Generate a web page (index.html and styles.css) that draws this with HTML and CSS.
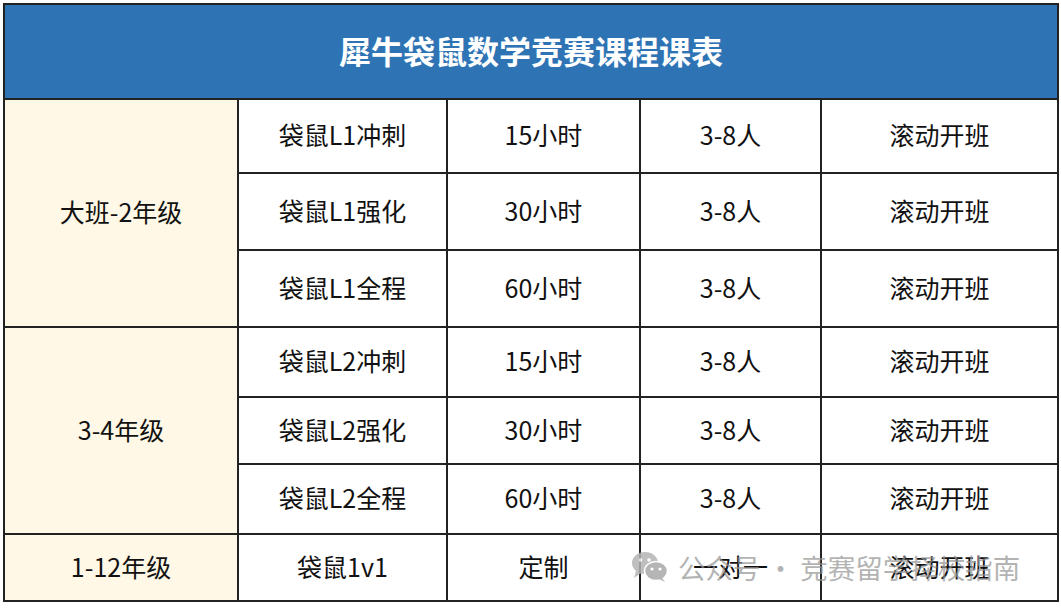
FILE: index.html
```html
<!DOCTYPE html>
<html lang="zh">
<head>
<meta charset="utf-8">
<link rel="stylesheet" href="styles.css">
</head>
<body>
<div class="wrap">
<table class="sched">
  <colgroup>
    <col class="c1"><col class="c2"><col class="c3"><col class="c4"><col class="c5">
  </colgroup>
  <tr class="head"><th colspan="5">犀牛袋鼠数学竞赛课程课表</th></tr>
  <tr class="r1"><td class="grade" rowspan="3">大班-2年级</td><td>袋鼠L1冲刺</td><td>15小时</td><td>3-8人</td><td>滚动开班</td></tr>
  <tr class="r2"><td>袋鼠L1强化</td><td>30小时</td><td>3-8人</td><td>滚动开班</td></tr>
  <tr class="r3"><td>袋鼠L1全程</td><td>60小时</td><td>3-8人</td><td>滚动开班</td></tr>
  <tr class="r4"><td class="grade" rowspan="3">3-4年级</td><td>袋鼠L2冲刺</td><td>15小时</td><td>3-8人</td><td>滚动开班</td></tr>
  <tr class="r5"><td>袋鼠L2强化</td><td>30小时</td><td>3-8人</td><td>滚动开班</td></tr>
  <tr class="r6"><td>袋鼠L2全程</td><td>60小时</td><td>3-8人</td><td>滚动开班</td></tr>
  <tr class="r7"><td class="grade">1-12年级</td><td>袋鼠1v1</td><td>定制</td><td>一对一</td><td>滚动开班</td></tr>
</table>
<div class="watermark">
  <svg class="wx" width="38" height="32" viewBox="0 0 38 32">
    <ellipse cx="14" cy="12" rx="13" ry="11" fill="#b4b4b4"/>
    <path d="M5 20 L3 27 L10 22 Z" fill="#b4b4b4"/>
    <ellipse cx="25" cy="20" rx="11.5" ry="9.5" fill="#a9a9a9" stroke="#fff" stroke-width="1.5"/>
    <path d="M31 27 L34 31 L28 28 Z" fill="#a9a9a9"/>
    <circle cx="9.5" cy="9" r="1.8" fill="#fff"/>
    <circle cx="18" cy="9" r="1.8" fill="#fff"/>
    <circle cx="21" cy="18" r="1.6" fill="#fff"/>
    <circle cx="29" cy="18" r="1.6" fill="#fff"/>
  </svg>
  <span>公众号 · 竞赛留学择校指南</span>
</div>
</div>
</body>
</html>
```
FILE: styles.css
```css
html, body {
  margin: 0;
  padding: 0;
  background: #ffffff;
}
.wrap {
  position: relative;
  padding: 3px 0 0 3px;
  width: 1061px;
  height: 608px;
  box-sizing: border-box;
}
.sched {
  border-collapse: collapse;
  table-layout: fixed;
  width: 1054px;
  font-family: "Noto Sans CJK SC", "Noto Sans", sans-serif;
  color: #111;
}
.c1 { width: 234px; }
.c2 { width: 209px; }
.c3 { width: 193px; }
.c4 { width: 181px; }
.c5 { width: 237px; }
.sched th, .sched td {
  border: 2px solid #222;
  padding: 0 0 3px 0;
  text-align: center;
  vertical-align: middle;
  font-size: 25px;
  font-weight: 400;
  line-height: 1;
}
.sched th {
  background: #2e74b5;
  color: #ffffff;
  font-size: 32px;
  font-weight: 700;
  padding-bottom: 4px;
}
.head { height: 95px; }
.r1 { height: 74px; }
.r2 { height: 77px; }
.r3 { height: 77px; }
.r4 { height: 70px; }
.r5 { height: 67px; }
.r6 { height: 70px; }
.r7 { height: 67px; }
.grade {
  background: #fff8e6;
}
.watermark {
  position: absolute;
  left: 631px;
  top: 551px;
  display: flex;
  align-items: center;
  gap: 9px;
  color: rgba(150, 150, 150, 0.72);
  font-family: "Noto Sans CJK SC", sans-serif;
  font-size: 27.5px;
  line-height: 32px;
  pointer-events: none;
}
.watermark .wx {
  opacity: 0.85;
}
```
